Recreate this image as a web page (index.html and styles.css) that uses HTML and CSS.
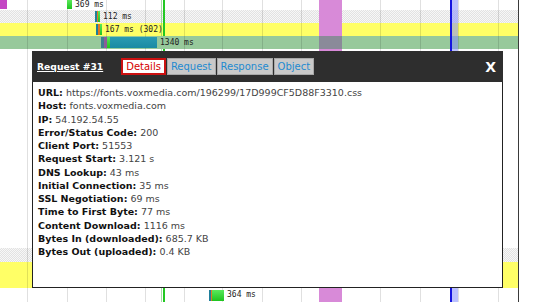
FILE: index.html
```html
<!DOCTYPE html>
<html>
<head>
<meta charset="utf-8">
<title>Request details</title>
<link rel="stylesheet" href="styles.css">
</head>
<body>
<div class="page">
  <div class="chart">
    <div class="row r0">
      <div class="bar tall"><span class="seg magenta" style="width:7px"></span></div>
      <div class="bar tall" style="margin-left:60px"><span class="seg grn" style="width:5px"></span></div>
      <span class="lbl">369 ms</span>
    </div>
    <div class="row r13 dotted">
      <div class="bar" style="margin-left:95px"><span class="seg teal" style="width:2px"></span><span class="seg orange" style="width:1px"></span><span class="seg grn" style="width:2px"></span></div>
      <span class="lbl">112 ms</span>
    </div>
    <div class="row r13 yellow">
      <div class="bar" style="margin-left:96px"><span class="seg teal" style="width:2px"></span><span class="seg orange" style="width:2px"></span><span class="seg grn" style="width:2px"></span></div>
      <span class="lbl">167 ms (302)</span>
    </div>
    <div class="row r13 green">
      <div class="bar" style="margin-left:101px"><span class="seg dteal" style="width:3px"></span><span class="seg purple" style="width:3px"></span><span class="seg grn" style="width:3px"></span><span class="seg content" style="width:47px"></span></div>
      <span class="lbl">1340 ms</span>
    </div>
    <div class="row spacer"></div>
    <div class="row r14 dotted"></div>
    <div class="row r26 yellow"></div>
    <div class="row r14">
      <div class="bar" style="margin-left:209px"><span class="seg teal" style="width:2px"></span><span class="seg orange" style="width:1px"></span><span class="seg grn" style="width:12px"></span></div>
      <span class="lbl">364 ms</span>
    </div>
  </div>

  <div class="vline" style="left:27px"></div>
  <div class="vline" style="left:67px"></div>
  <div class="vline" style="left:106px"></div>
  <div class="vline" style="left:145px"></div>
  <div class="vline" style="left:184px"></div>
  <div class="vline" style="left:222px"></div>
  <div class="vline" style="left:262px"></div>
  <div class="vline" style="left:301px"></div>
  <div class="vline" style="left:380px"></div>
  <div class="vline" style="left:420px"></div>
  <div class="vline" style="left:458px"></div>
  <div class="vline" style="left:498px"></div>

  <div class="marker pink"></div>
  <div class="marker gline-soft"></div>
  <div class="marker gline"></div>
  <div class="marker blue-halo"></div>
  <div class="marker blue"></div>

  <div class="dialog">
    <div class="dhead">
      <span class="title">Request #31</span>
      <div class="tabs">
        <span class="tab active">Details</span>
        <span class="tab">Request</span>
        <span class="tab">Response</span>
        <span class="tab">Object</span>
      </div>
      <span class="close">X</span>
    </div>
    <div class="dbody">
      <div><b>URL:</b> https://fonts.voxmedia.com/196299/17D999CF5D88F3310.css</div>
      <div><b>Host:</b> fonts.voxmedia.com</div>
      <div><b>IP:</b> 54.192.54.55</div>
      <div><b>Error/Status Code:</b> 200</div>
      <div><b>Client Port:</b> 51553</div>
      <div><b>Request Start:</b> 3.121 s</div>
      <div><b>DNS Lookup:</b> 43 ms</div>
      <div><b>Initial Connection:</b> 35 ms</div>
      <div><b>SSL Negotiation:</b> 69 ms</div>
      <div><b>Time to First Byte:</b> 77 ms</div>
      <div><b>Content Download:</b> 1116 ms</div>
      <div><b>Bytes In (downloaded):</b> 685.7 KB</div>
      <div><b>Bytes Out (uploaded):</b> 0.4 KB</div>
    </div>
  </div>
</div>
</body>
</html>
```
FILE: styles.css
```css
* { box-sizing: border-box; }
html, body { margin: 0; padding: 0; }
body {
  width: 540px;
  height: 302px;
  overflow: hidden;
  background: #fff;
  font-family: "DejaVu Sans", Verdana, sans-serif;
}
.page { position: relative; width: 540px; height: 302px; }

.chart {
  width: 519px;
  height: 302px;
  border-right: 1px solid #3a3a3a;
  display: flex;
  flex-direction: column;
}
.row { display: flex; align-items: center; flex: none; }
.r0 { height: 10px; align-items: flex-start; }
.r13 { height: 13px; }
.r14 { height: 14px; }
.r26 { height: 26px; }
.spacer { height: 199px; }
.dotted { background: repeating-conic-gradient(#e2e2e2 0 25%, #f7f7f7 0 50%) 0 0 / 2px 2px; }
.yellow { background: #ffff66; }
.green { background: #97c99b; }

.bar { display: flex; height: 11px; position: relative; z-index: 2; }
.bar.tall { height: 9px; }
.seg { display: block; height: 100%; }
.magenta { background: #c447c4; }
.grn { background: linear-gradient(#5be85b, #1fc41f); }
.teal { background: #1f7f9c; }
.dteal { background: #3d7f8f; }
.orange { background: #e07a20; }
.purple { background: #8b5c99; }
.content { background: linear-gradient(#2a9bb3, #1a8aa3); }

.lbl {
  font-family: "DejaVu Sans Mono", monospace;
  font-size: 8px;
  line-height: 10px;
  color: #222;
  margin-left: 3px;
  position: relative;
  z-index: 2;
}

.vline {
  position: absolute;
  top: 0;
  height: 302px;
  width: 1px;
  background: rgba(0, 0, 0, 0.12);
  z-index: 1;
}
.marker { position: absolute; top: 0; height: 302px; z-index: 1; }
.pink {
  left: 319px;
  width: 23px;
  background: linear-gradient(#d88ad8 0 36px, #8a8a99 36px 49px, #d88ad8 49px);
}
.gline-soft {
  left: 161px;
  width: 1px;
  background: linear-gradient(rgba(60, 180, 60, .45) 0 36px, transparent 36px 49px, rgba(60, 180, 60, .45) 49px);
}
.gline {
  left: 163px;
  width: 2px;
  background: linear-gradient(#22c822 0 36px, transparent 36px 49px, #22c822 49px);
}
.blue-halo { left: 452px; width: 6px; background: rgba(130, 140, 255, 0.55); }
.blue { left: 450px; width: 2px; background: #1414e0; }

.dialog {
  position: absolute;
  left: 32px;
  top: 51px;
  width: 471px;
  height: 237px;
  z-index: 5;
  display: flex;
  flex-direction: column;
}
.dhead {
  height: 31px;
  flex: none;
  background: #2e2e2e;
  display: flex;
  align-items: center;
  padding: 0 7px 0 5px;
}
.title {
  color: #fff;
  font-weight: bold;
  font-size: 9.2px;
  text-decoration: underline;
}
.tabs { display: flex; gap: 1px; margin-left: 18px; }
.tab {
  height: 17px;
  padding: 0 3px;
  background: #c9c9c9;
  border: 1px solid #a8a8a8;
  color: #1e8ad0;
  font-size: 10px;
  display: flex;
  align-items: center;
}
.tab.active {
  background: #fff;
  color: #d40000;
  border: 2px solid #cc1111;
}
.close {
  margin-left: auto;
  color: #fff;
  font-weight: bold;
  font-size: 14px;
}
.dbody {
  flex: 1;
  background: #fff;
  border: 1px solid #222;
  border-top: none;
  padding: 4px 5px;
  font-size: 9.5px;
  line-height: 13.25px;
  color: #444;
}
.dbody b { color: #111; }
```
